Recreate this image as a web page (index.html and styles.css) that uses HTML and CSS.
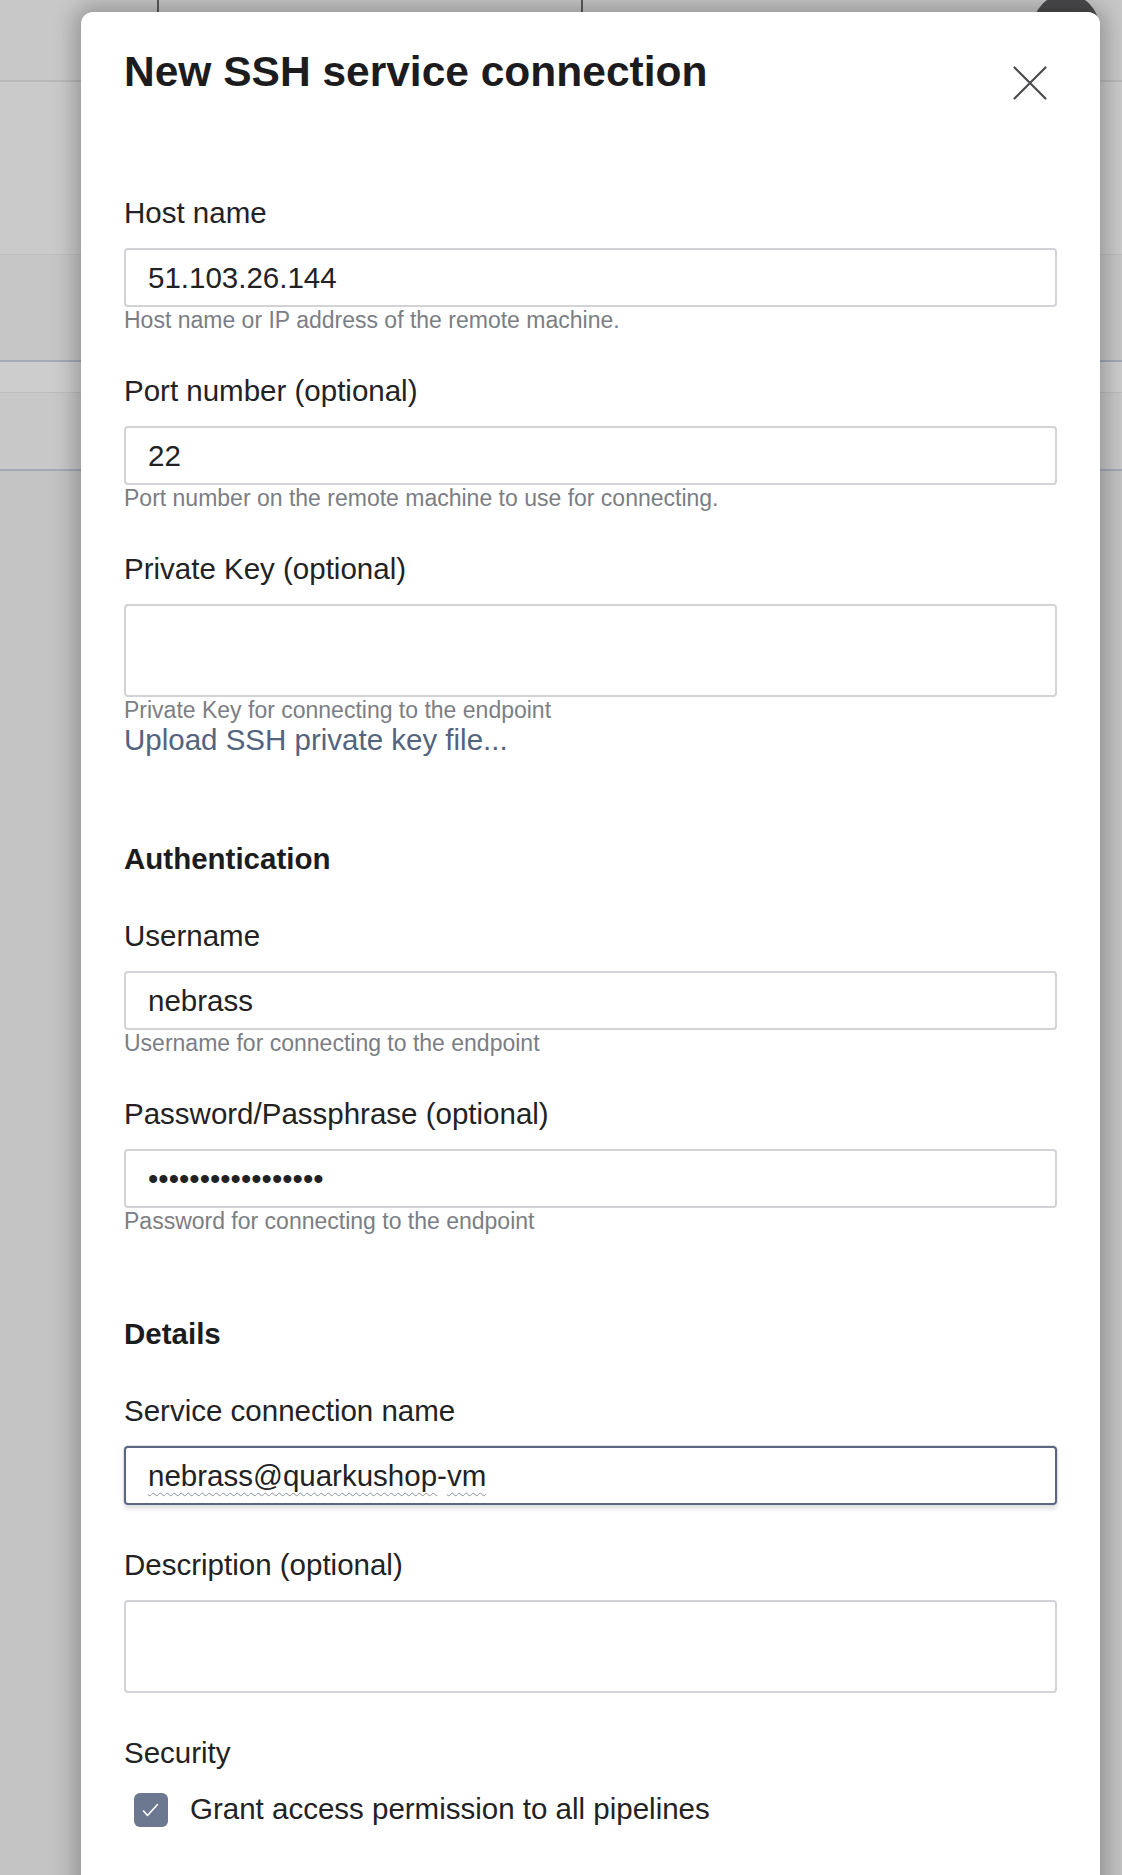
FILE: index.html
```html
<!DOCTYPE html>
<html lang="en">
<head>
<meta charset="utf-8">
<title>New SSH service connection</title>
<link rel="stylesheet" href="styles.css">
</head>
<body>
<div class="app">
  <div class="topbar">
    <div class="tb-cell tb-first"></div>
    <div class="tb-cell tb-mid"></div>
    <div class="tb-cell tb-last"><div class="avatar"></div></div>
  </div>
  <div class="band band-a"></div>
  <div class="band band-b"></div>
  <div class="band band-c"></div>
  <div class="band band-d"></div>
  <div class="band band-e"></div>
</div>

<div class="dialog">
  <div class="dialog-header">
    <h1 class="title">New SSH service connection</h1>
    <button class="close" aria-label="Close">
      <svg width="34" height="34" viewBox="0 0 34 34"><path d="M1.5 1.5 L32.5 32.5 M32.5 1.5 L1.5 32.5" stroke="#4b4b4e" stroke-width="2.2" stroke-linecap="round" fill="none"/></svg>
    </button>
  </div>

  <div class="field">
    <div class="label">Host name</div>
    <div class="input">51.103.26.144</div>
    <div class="help">Host name or IP address of the remote machine.</div>
  </div>

  <div class="field">
    <div class="label">Port number (optional)</div>
    <div class="input">22</div>
    <div class="help">Port number on the remote machine to use for connecting.</div>
  </div>

  <div class="field">
    <div class="label">Private Key (optional)</div>
    <div class="input textarea"></div>
    <div class="help">Private Key for connecting to the endpoint</div>
    <div class="link">Upload SSH private key file...</div>
  </div>

  <h2 class="section">Authentication</h2>

  <div class="field">
    <div class="label">Username</div>
    <div class="input">nebrass</div>
    <div class="help">Username for connecting to the endpoint</div>
  </div>

  <div class="field">
    <div class="label">Password/Passphrase (optional)</div>
    <div class="input password">•••••••••••••••••</div>
    <div class="help">Password for connecting to the endpoint</div>
  </div>

  <h2 class="section">Details</h2>

  <div class="field">
    <div class="label">Service connection name</div>
    <div class="input focused"><span class="spell">nebrass@quarkushop</span>-<span class="spell">vm</span></div>
  </div>

  <div class="field">
    <div class="label">Description (optional)</div>
    <div class="input textarea"></div>
  </div>

  <div class="field">
    <div class="label">Security</div>
    <div class="check-row">
      <span class="checkbox">
        <svg width="34" height="34" viewBox="0 0 34 34"><polyline points="9.5,18 13.5,22.5 23.5,11.5" fill="none" stroke="#ffffff" stroke-width="1.6" stroke-linecap="round" stroke-linejoin="round"/></svg>
      </span>
      <span class="check-label">Grant access permission to all pipelines</span>
    </div>
  </div>
</div>
</body>
</html>
```

FILE: styles.css
```css
* {
  box-sizing: border-box;
}

html,
body {
  margin: 0;
  padding: 0;
}

body {
  width: 1122px;
  height: 1875px;
  overflow: hidden;
  position: relative;
  background: #c3c3c3;
  font-family: "Liberation Sans", Arial, sans-serif;
  color: #202020;
}

/* ---------- dimmed page behind the dialog ---------- */
.app {
  display: flex;
  flex-direction: column;
}

.topbar {
  height: 82px;
  display: flex;
  background: #c8c8c8;
  border-bottom: 2px solid #b9b9b9;
}

.tb-cell {
  height: 100%;
}

.tb-first {
  width: 157px;
}

.tb-mid {
  width: 424px;
  border-left: 2px solid #5a5a5a;
}

.tb-last {
  flex: 1;
  border-left: 2px solid #5a5a5a;
  display: flex;
  justify-content: flex-end;
  padding-right: 22px;
}

.avatar {
  width: 66px;
  height: 66px;
  margin-top: -6px;
  margin-right: 1px;
  border-radius: 50%;
  background: #4b4b4d;
}

.band-a {
  height: 173px;
  background: #cacaca;
  border-bottom: 1px solid #bfbfbf;
}

.band-b {
  height: 107px;
  background: #c6c6c6;
  border-bottom: 2px solid #a3aab6;
}

.band-c {
  height: 31px;
  background: #cdcdcd;
  border-bottom: 1px solid #bcbcbc;
}

.band-d {
  height: 78px;
  background: #c8c8c8;
  border-bottom: 2px solid #a3aab6;
}

.band-e {
  flex: 1;
}

/* ---------- dialog ---------- */
.dialog {
  position: absolute;
  left: 81px;
  top: 12px;
  width: 1019px;
  height: 1900px;
  background: #ffffff;
  border-radius: 12px;
  box-shadow: 0 0 22px 6px rgba(0, 0, 0, 0.26);
  padding: 35px 43px 0 43px;
}

.dialog-header {
  display: flex;
  justify-content: space-between;
  align-items: flex-start;
  margin-bottom: 95px;
}

.title {
  margin: 0;
  font-size: 42.5px;
  line-height: 50px;
  font-weight: 700;
  color: #1c1c1e;
}

.close {
  margin: 19px 10px 0 0;
  padding: 0;
  width: 34px;
  height: 34px;
  border: 0;
  background: transparent;
  display: block;
}

.close svg {
  display: block;
}

.field {
  margin-bottom: 42px;
}

.label {
  font-size: 29.5px;
  line-height: 36px;
  color: #222225;
  margin-bottom: 17px;
}

.input {
  height: 59px;
  border: 2px solid #d2d3d6;
  border-radius: 4px;
  padding: 0 22px;
  font-size: 29.5px;
  line-height: 55px;
  color: #222225;
  white-space: nowrap;
}

.textarea {
  height: 93px;
}

.focused {
  border-color: #5b6780;
  box-shadow: 0 0 0 1px #dfe1e5, 0 4px 5px rgba(0, 0, 0, 0.12);
}

.spell {
  text-decoration: underline wavy #8d93a3;
  text-decoration-thickness: 1px;
  text-underline-offset: 6px;
}

.help {
  padding-top: 2px;
  font-size: 23px;
  line-height: 22px;
  color: #7b7e84;
}

.link {
  margin-top: 2px;
  font-size: 29.5px;
  line-height: 34px;
  color: #53647f;
}

/* top margin collapses with the preceding field's 42px bottom margin */
.section {
  margin: 84px 0 41px 0;
  font-size: 29.5px;
  line-height: 36px;
  font-weight: 700;
  color: #1c1c1e;
}

.check-row {
  display: flex;
  align-items: center;
  margin-top: 22px;
  margin-left: 10px;
}

.checkbox {
  width: 34px;
  height: 34px;
  border-radius: 6px;
  background: #6b788f;
  display: block;
  flex: none;
}

.checkbox svg {
  display: block;
}

.check-label {
  margin-left: 22px;
  margin-top: -3px;
  font-size: 29.5px;
  line-height: 36px;
  color: #222225;
}
```
